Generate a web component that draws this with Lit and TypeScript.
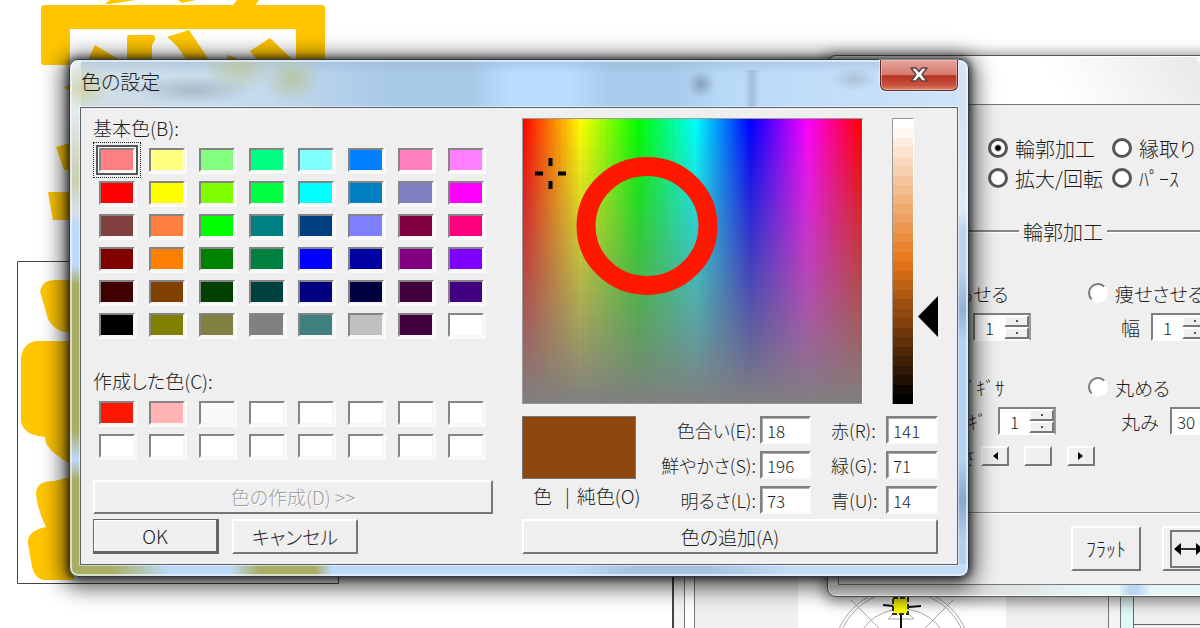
import { LitElement, html, svg, css } from "lit";
import { customElement, property } from "lit/decorators.js";
import { styleMap } from "lit/directives/style-map.js";
import { classMap } from "lit/directives/class-map.js";

const BASIC = [
  ["#ff8080", "#ffff80", "#80ff80", "#00ff80", "#80ffff", "#0080ff", "#ff80c0", "#ff80ff"],
  ["#ff0000", "#ffff00", "#80ff00", "#00ff40", "#00ffff", "#0080c0", "#8080c0", "#ff00ff"],
  ["#804040", "#ff8040", "#00ff00", "#008080", "#004080", "#8080ff", "#800040", "#ff0080"],
  ["#800000", "#ff8000", "#008000", "#008040", "#0000ff", "#0000a0", "#800080", "#8000ff"],
  ["#400000", "#804000", "#004000", "#004040", "#000080", "#000040", "#400040", "#400080"],
  ["#000000", "#808000", "#808040", "#808080", "#408080", "#c0c0c0", "#400040", "#ffffff"],
].flat();

const CUSTOM = ["#ff1800", "#ffb3b3", "#fafafa", ...Array(13).fill("#ffffff")];

/* Luminance ramp in flat bands, from white down to black. */
const BANDS = 30;
const RAMP = `linear-gradient(${Array.from({ length: BANDS }, (_, i) => {
  const colour = `hsl(27 82% ${Math.round(100 - (i * 100) / (BANDS - 1))}%)`;
  return `${colour} ${(i * 100) / BANDS}% ${((i + 1) * 100) / BANDS}%`;
}).join(",")})`;

const shared = css`
  :host,
  * {
    box-sizing: border-box;
  }
  button,
  input {
    font: inherit;
    color: inherit;
    margin: 0;
  }
  .btn {
    background: #efefef;
    border: 2px solid;
    border-color: #fff #777 #777 #fff;
    padding: 0;
    line-height: 24px;
    white-space: nowrap;
  }
  .field {
    background: #fff;
    border: 2px solid;
    border-color: #808080 #fafafa #fafafa #808080;
    border-radius: 0;
    outline: none;
    box-shadow: inset 1px 1px 0 #aaa;
  }
`;

@customElement("color-dialog")
export class ColorDialog extends LitElement {
  static styles = [
    shared,
    css`
      :host {
        display: block;
        border: 1px solid #2e3a46;
        border-radius: 9px;
        padding: 0 10px 11px;
        background:
          radial-gradient(ellipse 26px 24px at 14px 28px, #c9cf9bcc, transparent),
          radial-gradient(ellipse 36px 28px at 168px 6px, #bcc49acc, transparent),
          radial-gradient(ellipse 30px 26px at 222px 18px, #b7c295cc, transparent),
          radial-gradient(ellipse 60px 14px at 122px 30px, #8d9dab88, transparent),
          radial-gradient(ellipse 14px 14px at 631px 24px, #7088a8aa, transparent),
          radial-gradient(ellipse 24px 12px at 784px 19px, #8795a466, transparent),
          linear-gradient(90deg, transparent 674px, #8da3bb88 682px, transparent 690px) 0 10px / 100% 37px no-repeat,
          linear-gradient(90deg, #a9ad64 0 40px, #bddafa 100px 160px, #a9ad64 190px 245px, #bddafa 262px 500px, #a7c3e0 560px 640px, #c4ddf7 720px) 0 100% / 100% 12px no-repeat,
          linear-gradient(#e5ecf2 0 48px, #c9cfad 120px, #d9dfe2 150px, #bddafa 165px 205px, #a9ad64 225px 370px, #bddafa 400px, #a9ad64 420px) 0 0 / 11px 100% no-repeat,
          linear-gradient(#d5e4f4 0 60px, #dfeaf6 150px, #bdd4ee 170px 210px, #8fb2d6 250px, #b2d2f3 280px 400px, #88a9cb 440px, #b3cff0 480px) 100% 0 / 11px 100% no-repeat,
          linear-gradient(#8ea9c866, transparent 14px),
          linear-gradient(90deg, #d3dfe6, #c2d9ee 200px, #a9c9e8 320px 400px, #b9dcff 440px 500px, #a9caea 540px 600px, #b9daf9 660px, #cfe3f8);
        box-shadow:
          inset 0 0 0 2px #f0f6fcaa,
          0 4px 22px 6px #000000b0,
          0 0 6px 2px #00000088;
      }
      .titlebar {
        display: flex;
        justify-content: space-between;
        height: 47px;
      }
      .title {
        margin: 0;
        padding: 8px 1px;
        font-size: 20px;
        font-weight: 300;
        line-height: 28px;
        font-feature-settings: "palt";
      }
      .close {
        width: 78px;
        height: 31px;
        padding: 0;
        border: 1px solid #602a28;
        border-top: 0;
        border-radius: 0 0 6px 6px;
        background: linear-gradient(#e6a49b, #d5796d 50%, #b93123 52%, #c9543f 85%, #dc8a72);
        box-shadow: inset 0 0 0 1px #f2c3bb99, 0 0 0 1px #ffffff66;
        display: grid;
        place-items: center;
      }
      .client {
        display: grid;
        grid-template-columns: 400px 1fr;
        column-gap: 29px;
        padding: 8px 22px 10px 12px;
        background: #efefef;
        border: 1px solid #59636e;
        box-shadow: 0 0 0 1px #ffffff88;
      }
      .left,
      .right {
        display: flex;
        flex-direction: column;
      }
      .caption {
        line-height: 24px;
        margin: 0 0 8px;
      }
      .palette {
        display: grid;
        grid-template-columns: repeat(8, 36px);
        grid-auto-rows: 24px;
        justify-content: space-between;
        row-gap: 9px;
        padding: 0 9px 0 6px;
        margin-bottom: 32px;
      }
      .palette.custom {
        margin-bottom: 22px;
      }
      .swatch {
        padding: 0;
        border: 2px solid;
        border-color: #848484 #f6f6f6 #f6f6f6 #848484;
        box-shadow: 1px 1px 0 1px #fafafa;
      }
      .swatch.on {
        box-shadow: 0 0 0 1px #fff, 0 0 0 3px #555;
        outline: 1px dotted #222;
        outline-offset: 5px;
      }
      .wide {
        height: 34px;
        color: #a0a0a0;
        text-shadow: 1px 1px 0 #fff;
      }
      .actions {
        display: grid;
        grid-template-columns: 126px 126px;
        column-gap: 13px;
        margin-top: 5px;
      }
      .actions .btn,
      .add {
        height: 35px;
      }
      .actions .default {
        border-color: #666;
        border-width: 1px 3px 3px 1px;
        box-shadow: inset 1px 1px 0 #fff;
      }
      .pickers {
        display: flex;
        margin-top: 2px;
        height: 286px;
      }
      .spectrum {
        position: relative;
        width: 341px;
        border: 1px solid #999;
        border-right-color: #fff;
        background:
          repeating-linear-gradient(90deg, #00000005 0 1px, transparent 1px 6px),
          repeating-linear-gradient(#00000004 0 1px, transparent 1px 6px),
          linear-gradient(#80808000, #808080),
          linear-gradient(90deg, #f00, #ff0 17%, #0f0 34%, #0ff 51%, #00f 67%, #f0f 84%, #f00);
      }
      .marks {
        position: absolute;
        inset: 0;
        width: 100%;
        height: 100%;
      }
      .ramp {
        width: 22px;
        margin-left: 29px;
        border: 1px solid #999;
        border-right-color: #fff;
        border-bottom: 0;
      }
      .arrow {
        align-self: flex-start;
        margin: 178px 0 0 4px;
      }
      .values {
        display: grid;
        grid-template-columns: 114px 1fr 51px 75px 52px;
        grid-template-rows: repeat(3, 28px);
        row-gap: 7px;
        align-items: center;
        margin: 12px 0 5px;
      }
      .preview {
        grid-row: 1 / 3;
        align-self: stretch;
        background: #8d470e;
        border: 1px solid #777;
      }
      .solid {
        grid-area: 3 / 1;
        align-self: start;
        display: flex;
        padding-left: 11px;
        line-height: 20px;
        white-space: nowrap;
      }
      .solid b {
        font-weight: 300;
        padding: 0 7px 0 13px;
      }
      .values label {
        font-size: 18px;
        text-align: right;
        white-space: nowrap;
        padding-right: 4px;
      }
      .values .rgb {
        text-align: left;
        padding: 0 0 0 20px;
      }
      .values .field {
        width: 100%;
        height: 28px;
        padding: 0 5px;
        font-size: 17px;
      }
      .add {
        width: 100%;
      }
    `,
  ];

  private swatch(c: string, on = false) {
    return html`<button
      class=${classMap({ swatch: true, on })}
      aria-label=${c}
      style=${styleMap({ background: c })}
    ></button>`;
  }

  private value(id: string, text: string, v: number, rgb = false) {
    return html`<label class=${rgb ? "rgb" : "hsl"} for=${id}>${text}</label>
      <input class="field" id=${id} .value=${String(v)} />`;
  }

  render() {
    return html`
      <header class="titlebar">
        <h1 class="title">色の設定</h1>
        <button class="close" aria-label="閉じる">
          <svg width="20" height="18" viewBox="0 0 20 18">
            <path
              d="M2 2h5l3 3.600 3-3.600h5l-5 6.500 5 6.500h-5l-3-3.600-3 3.600h-5l5-6.500z"
              fill="#fff" stroke="#59413f" stroke-width="1.500" stroke-linejoin="round"
            />
          </svg>
        </button>
      </header>
      <div class="client">
        <section class="left">
          <p class="caption">基本色(B):</p>
          <div class="palette">${BASIC.map((c, i) => this.swatch(c, i === 0))}</div>
          <p class="caption">作成した色(C):</p>
          <div class="palette custom">${CUSTOM.map((c) => this.swatch(c))}</div>
          <button class="btn wide" disabled>色の作成(D) &gt;&gt;</button>
          <div class="actions">
            <button class="btn default">OK</button>
            <button class="btn">キャンセル</button>
          </div>
        </section>
        <section class="right">
          <div class="pickers">
            <div class="spectrum">
              <svg class="marks" viewBox="0 0 339 284">
                <path d="M12 54.500h8M35 54.500h8M27.500 39v8M27.500 62v8" stroke="#000" stroke-width="4" fill="none" />
                <ellipse cx="124" cy="107" rx="61" ry="59.500" fill="none" stroke="#ff1800" stroke-width="19" />
              </svg>
            </div>
            <div class="ramp" style=${styleMap({ background: RAMP })}></div>
            <svg class="arrow" width="20" height="41" viewBox="0 0 20 41"><path d="M20 0v41L0 20.500z" /></svg>
          </div>
          <div class="values">
            <div class="preview"></div>
            ${this.value("hue", "色合い(E):", 18)} ${this.value("red", "赤(R):", 141, true)}
            ${this.value("sat", "鮮やかさ(S):", 196)} ${this.value("green", "緑(G):", 71, true)}
            <div class="solid">色<b>|</b>純色(O)</div>
            ${this.value("lum", "明るさ(L):", 73)} ${this.value("blue", "青(U):", 14, true)}
          </div>
          <button class="btn add">色の追加(A)</button>
        </section>
      </div>
    `;
  }
}

@customElement("spin-box")
export class SpinBox extends LitElement {
  @property() value = "";
  @property() label = "";
  static styles = [
    shared,
    css`
      :host {
        display: flex;
        flex: none;
        width: 58px;
        height: 28px;
        border: 2px solid;
        border-color: #808080 #999 #fff #808080;
        background: #fff;
      }
      .num {
        flex: 1;
        min-width: 0;
        border: 0;
        background: none;
        padding: 0 3px;
        text-align: center;
        font-size: 17px;
        outline: none;
      }
      .steps {
        display: grid;
        grid-template-rows: 1fr 1fr;
        width: 25px;
      }
      .step {
        display: grid;
        place-items: center;
        line-height: 0;
      }
      .dot {
        width: 2px;
        height: 2px;
        background: #555;
      }
    `,
  ];
  render() {
    return html`
      <input class="num" aria-label=${this.label} .value=${this.value} />
      <span class="steps">
        <button class="btn step" aria-label="増やす"><i class="dot"></i></button>
        <button class="btn step" aria-label="減らす"><i class="dot"></i></button>
      </span>
    `;
  }
}

@customElement("effect-window")
export class EffectWindow extends LitElement {
  static styles = [
    shared,
    css`
      :host {
        display: block;
        border: 1px solid #555;
        border-radius: 9px;
        padding: 0 10px 11px;
        background:
          linear-gradient(90deg, #ddd 0 150px, #e4f5f4 260px 290px, #bcd6f4 302px 310px, #e4f5f4 322px) 0 100% / 100% 11px no-repeat,
          linear-gradient(62deg, #fff 0 210px, #e9e9e9 345px, #fff 350px) 0 0 / 100% 48px no-repeat,
          #f4f4f4;
        box-shadow: inset 0 0 0 1px #fff, 0 2px 14px 3px #00000077;
      }
      .titlebar {
        height: 48px;
      }
      .client {
        background: #efefef;
        border: 1px solid #777;
        height: 481px;
        display: flex;
        flex-direction: column;
      }
      .kinds {
        display: grid;
        grid-template-columns: 124px 1fr;
        row-gap: 6px;
        padding: 31px 0 0 149px;
        font-size: 20px;
      }
      .choice {
        display: flex;
        align-items: center;
        gap: 7px;
        height: 24px;
        white-space: nowrap;
      }
      .radio {
        appearance: none;
        flex: none;
        width: 20px;
        height: 20px;
        border: 3px solid #555;
        border-radius: 50%;
        background: #fff;
      }
      .radio:checked {
        background: radial-gradient(circle, #000 0 2px, #fff 4px);
      }
      .radio.soft {
        border: 2px solid;
        border-color: #777 #fff #fff #777;
      }
      .group {
        display: flex;
        align-items: center;
        gap: 4px;
        margin: 29px 0 38px;
        height: 24px;
        font-size: 20px;
        white-space: nowrap;
      }
      .group::before,
      .group::after {
        content: "";
        flex: none;
        width: 180px;
        height: 2px;
        background: #888;
        border-bottom: 1px solid #fff;
      }
      .options {
        display: grid;
        grid-template-columns: 249px 1fr;
        row-gap: 8px;
      }
      .first {
        padding-left: 72px;
      }
      .line {
        display: flex;
        align-items: center;
        gap: 11px;
        height: 28px;
        white-space: nowrap;
      }
      .line.a {
        padding-left: 134px;
      }
      .line.low {
        padding-left: 129px;
      }
      .line.b {
        padding-left: 33px;
      }
      .row3 {
        margin-top: 26px;
      }
      .scroll {
        display: flex;
        align-items: center;
        gap: 15px;
        margin-top: 11px;
        padding-left: 119px;
        height: 20px;
      }
      .scroll .btn {
        width: 28px;
        height: 20px;
        flex: none;
        display: grid;
        place-items: center;
      }
      .scroll span {
        margin-right: -9px;
      }
      .buttons {
        display: flex;
        gap: 21px;
        margin-top: 46px;
        padding: 13px 0 0 232px;
        border-top: 1px solid #888;
        box-shadow: inset 0 1px 0 #fff;
      }
      .buttons .btn {
        width: 70px;
        height: 45px;
        flex: none;
        font-size: 20px;
      }
      .arrowbtn {
        display: grid;
        place-items: center;
      }
    `,
  ];

  private radio(id: string, text: string, checked = false, soft = false) {
    return html`<label class="choice" for=${id}
      ><input class="radio ${soft ? "soft" : ""}" type="radio" id=${id} name=${soft ? "shape" : "kind"} .checked=${checked} />${text}</label
    >`;
  }

  render() {
    return html`
      <header class="titlebar"></header>
      <div class="client">
        <div class="kinds">
          ${this.radio("k1", "輪郭加工", true)} ${this.radio("k2", "縁取り")}
          ${this.radio("k3", "拡大/回転")} ${this.radio("k4", "ﾊﾟｰｽ")}
        </div>
        <div class="group">輪郭加工</div>
        <div class="options">
          <div class="first">${this.radio("s1", "太らせる", false, true)}</div>
          ${this.radio("s2", "痩せさせる", false, true)}
          <div class="line a"><spin-box value="1" label="幅"></spin-box></div>
          <div class="line b">幅<spin-box value="1" label="幅"></spin-box></div>
          <div class="first row3">${this.radio("s3", "ｷﾞｻﾞｷﾞｻ", false, true)}</div>
          <div class="row3">${this.radio("s4", "丸める", false, true)}</div>
          <div class="line low">ｷﾞ<spin-box value="1" label="ギザ"></spin-box></div>
          <div class="line b">丸み<spin-box value="30" label="丸み"></spin-box></div>
        </div>
        <div class="scroll">
          <span>さ</span>
          <button class="btn" aria-label="左"><svg width="6" height="8"><path d="M6 0v8L1 4z" /></svg></button>
          <button class="btn" aria-label="つまみ"></button>
          <button class="btn" aria-label="右"><svg width="6" height="8"><path d="M0 0v8l5-4z" /></svg></button>
        </div>
        <div class="buttons">
          <button class="btn">ﾌﾗｯﾄ</button>
          <button class="btn arrowbtn" aria-label="左右">
            <svg width="54" height="38" viewBox="0 0 54 38">
              <path d="M1 1h52v36H1z" fill="none" stroke="#777" stroke-width="2" />
              <path d="M10 19h18" stroke="#333" stroke-width="2" />
              <path d="M11 13v12L4 19zM26 13v12l7-6z" />
            </svg>
          </button>
        </div>
      </div>
    `;
  }
}

@customElement("app-root")
export class AppRoot extends LitElement {
  static styles = css`
    :host {
      display: block;
      position: relative;
      height: 100vh;
      overflow: hidden;
      background: #fff;
      color: #1d1d1d;
      font: 300 19px "Noto Sans CJK JP", sans-serif;
      font-feature-settings: "palt";
    }
    .art,
    .tool,
    .effect,
    .dialog {
      position: absolute;
    }
    .art {
      left: 0;
      top: 0;
    }
    .tool {
      left: 672px;
      top: 500px;
    }
    .effect {
      left: 827px;
      top: 55px;
      width: 480px;
    }
    .dialog {
      left: 69px;
      top: 59px;
      width: 75%;
    }
  `;

  private art() {
    return svg`
      <g fill="#ffc600">
        <path d="M110 0h25l-25 4h-5zM178 0h18l-14 3zM237 0h22l-8 12h-24z" />
        <path d="M44 5H322q3 0 3 3V80H296V29H70V65H44q-3 0-3-3V8q0-3 3-3z" />
        <path d="M95 45L120 60H88zM127 38q0-3 3-3h23q3 1 2 5l-3 5v15h-25zM167 37l22-7 20 30h-23q-7-14-19-23zM228 55l15 6h-17zM250 51l20-13 24 23h-36z" />
        <path d="M72 82l-8 6 8 3zM56 147l14-4v27h-6zM48 192h22v28H53z" />
        <path d="M40 291q3-11 14-11h20v52H66q-12-1-18-13z" />
        <path d="M21 358q2-15 15-17h38v125q-30-16-29-29-23-2-24-17z" />
        <path d="M36 494q0-13 18-13l20-5v104H44q-9-1-12-13l-4-24q-1-12 18-16-9-19-10-33z" />
      </g>
      <path d="M17.500 261.500h321v322h-321z" fill="none" stroke="#444" />
    `;
  }

  private tool() {
    return svg`
      <rect width="528" height="128" fill="#efefef" />
      <path d="M1 0v128" stroke="#444" stroke-width="2" />
      <path d="M2 0h10v128H2z" fill="#f4f4f4" />
      <path d="M13 0h9v128h-9z" fill="#fff" />
      <path d="M12.500 0v128M22.500 0v128" stroke="#777" />
      <rect x="126" width="208" height="128" fill="#fff" />
      <g fill="none" stroke="#aaa">
        <circle cx="230" cy="157" r="69" /><circle cx="230" cy="157" r="66" />
        <circle cx="230" cy="157" r="48" />
        <path d="M179 100l78 78M281 100l-78 78M216 119h26M216 119l6-6M242 119l-6-6" />
      </g>
      <path d="M211 105l11 1M237 107l12-1M229 114v14" stroke="#111" stroke-width="2" />
      <path d="M221 98h15v16h-15z" fill="#ff0" stroke="#333" stroke-width="2" stroke-dasharray="5 2" />
      <path d="M437 0h11v128h-11z" fill="#f5f5f5" />
      <path d="M449 0h12v128h-12z" fill="#dff8f6" />
      <path d="M436.500 0v128M448.500 0v128" stroke="#777" />
      <path d="M461.500 0v128M461 124.500h67" stroke="#666" />
    `;
  }

  render() {
    return html`
      <svg class="art" width="345" height="590">${this.art()}</svg>
      <svg class="tool" width="528" height="128">${this.tool()}</svg>
      <effect-window class="effect"></effect-window>
      <color-dialog class="dialog"></color-dialog>
    `;
  }
}
